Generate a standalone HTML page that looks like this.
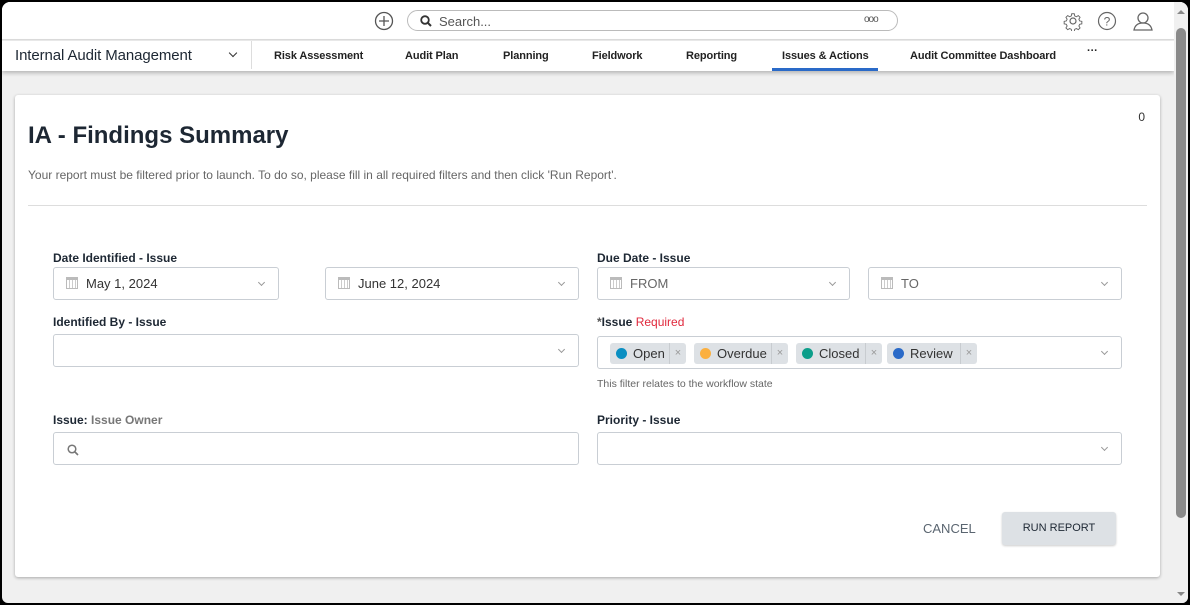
<!DOCTYPE html><html><head><style>
*{box-sizing:border-box;margin:0;padding:0}
body{width:1190px;height:605px;background:#000;font-family:"Liberation Sans",sans-serif;overflow:hidden;position:relative}
.win{position:absolute;left:2px;top:2px;width:1186px;height:601px;background:#f0f0f0;border-radius:8px 8px 6px 6px;overflow:hidden}
.top{position:absolute;left:0;top:0;width:1172px;height:38px;background:#fff;border-bottom:1px solid #ddd}
.nav{position:absolute;left:0;top:39px;width:1172px;height:30px;background:#fff;box-shadow:0 2px 4px rgba(0,0,0,.25)}
.nav span{position:absolute;top:9px;font-size:11px;color:#222;font-weight:bold;letter-spacing:-.1px}
.sb{position:absolute;right:0;top:0;width:14px;height:601px;background:#f0f0f0}
.abs{position:absolute}
.card{position:absolute;left:13px;top:93px;width:1145px;height:482px;background:#fff;border-radius:3px;box-shadow:0 1px 3px rgba(0,0,0,.3)}
.lbl{position:absolute;font-size:12px;color:#1d2733;font-weight:bold}
.inp{position:absolute;height:33px;border:1px solid #c9ced4;border-radius:3px;background:#fff;font-size:13px;color:#333}
.inp .t{position:absolute;left:32px;top:8px}
.chev{position:absolute;right:14px;top:12px;width:5px;height:5px;border-right:1px solid #999;border-bottom:1px solid #999;transform:rotate(45deg)}
.cal{position:absolute;left:12px;top:9px;width:12px;height:12px;border:1px solid #bbb;border-top:3px solid #bbb;background:repeating-linear-gradient(90deg,#fff 0 2px,#ccc 2px 3px)}
.chip{position:absolute;top:6px;height:21px;background:#dde1e5;border-radius:3px;font-size:13px;color:#333}
.chip .d{position:absolute;left:6px;top:5px;width:11px;height:11px;border-radius:50%}
.chip .n{position:absolute;left:23px;top:3px}
.chip .x{position:absolute;right:0;top:0;width:17px;height:21px;border-left:1px solid #c8ccd0;color:#999;font-size:11px;text-align:center;line-height:21px}
</style></head><body><div class="win">
<div class="top">
<svg class="abs" style="left:372px;top:9px" width="20" height="20"><circle cx="10" cy="10" r="8.5" fill="none" stroke="#555" stroke-width="1.3"/><path d="M10 5v10M5 10h10" stroke="#555" stroke-width="1.3"/></svg>
<div class="abs" style="left:405px;top:8px;width:491px;height:21px;border:1px solid #bbb;border-radius:11px"></div>
<svg class="abs" style="left:418px;top:13px" width="12" height="12"><circle cx="5" cy="5" r="3.8" fill="none" stroke="#333" stroke-width="1.8"/><path d="M8 8l3 3" stroke="#333" stroke-width="2"/></svg>
<span class="abs" style="left:437px;top:12px;font-size:13px;color:#555">Search...</span>
<span class="abs" style="left:862px;top:12px;font-size:10px;color:#555;letter-spacing:-1px">ooo</span>
<svg class="abs" style="left:1061px;top:9px" width="20" height="20"><circle cx="10" cy="10" r="3" fill="none" stroke="#666" stroke-width="1.2"/><path d="M8.5 1.5h3l.5 2.5 2 1 2.2-1.4 2.1 2.1-1.4 2.2 1 2 2.5.5v3l-2.5.5-1 2 1.4 2.2-2.1 2.1-2.2-1.4-2 1-.5 2.5h-3l-.5-2.5-2-1-2.2 1.4-2.1-2.1 1.4-2.2-1-2-2.5-.5v-3l2.5-.5 1-2-1.4-2.2 2.1-2.1 2.2 1.4 2-1z" fill="none" stroke="#666" stroke-width="1.1" transform="translate(10 10) scale(.85) translate(-10 -10)"/></svg>
<svg class="abs" style="left:1095px;top:9px" width="20" height="20"><circle cx="10" cy="10" r="8.5" fill="none" stroke="#666" stroke-width="1.2"/><text x="10" y="14.5" font-size="12" text-anchor="middle" fill="#666" font-family="Liberation Sans">?</text></svg>
<svg class="abs" style="left:1130px;top:8px" width="22" height="22"><circle cx="11" cy="8" r="5" fill="none" stroke="#666" stroke-width="1.3"/><path d="M2 20c1-5 4-7 9-7s8 2 9 7z" fill="none" stroke="#666" stroke-width="1.3"/></svg>
</div>
<div class="nav">
<span style="left:13px;top:6px;font-size:15px;color:#1d2733;font-weight:normal">Internal Audit Management</span>
<div class="abs" style="left:228px;top:9px;width:6px;height:6px;border-right:1.5px solid #333;border-bottom:1.5px solid #333;transform:rotate(45deg)"></div>
<div class="abs" style="left:249px;top:0;width:1px;height:28px;background:#ddd"></div>
<span style="left:272px">Risk Assessment</span><span style="left:403px">Audit Plan</span><span style="left:501px">Planning</span><span style="left:590px">Fieldwork</span><span style="left:684px">Reporting</span><span style="left:780px">Issues &amp; Actions</span><span style="left:908px">Audit Committee Dashboard</span><span style="left:1085px;top:4px">···</span>
<div class="abs" style="left:770px;top:27px;width:106px;height:3px;background:#2a6ac8"></div>
</div>
<div class="card">
<div class="abs" style="left:13px;top:27px;font-size:24px;color:#1d2733;font-weight:bold">IA - Findings Summary</div>
<div class="abs" style="right:15px;top:15px;font-size:12px;color:#333">0</div>
<div class="abs" style="left:13px;top:73px;font-size:12px;color:#666">Your report must be filtered prior to launch. To do so, please fill in all required filters and then click 'Run Report'.</div>
<div class="abs" style="left:13px;top:110px;width:1119px;height:1px;background:#ddd"></div>
<div class="lbl" style="left:38px;top:156px">Date Identified - Issue</div>
<div class="inp" style="left:38px;top:172px;width:226px"><div class="cal"></div><span class="t">May 1, 2024</span><div class="chev"></div></div>
<div class="inp" style="left:310px;top:172px;width:254px"><div class="cal"></div><span class="t">June 12, 2024</span><div class="chev"></div></div>
<div class="lbl" style="left:582px;top:156px">Due Date - Issue</div>
<div class="inp" style="left:582px;top:172px;width:253px;color:#666"><div class="cal"></div><span class="t">FROM</span><div class="chev"></div></div>
<div class="inp" style="left:853px;top:172px;width:254px;color:#666"><div class="cal"></div><span class="t">TO</span><div class="chev"></div></div>
<div class="lbl" style="left:38px;top:220px">Identified By - Issue</div>
<div class="inp" style="left:38px;top:239px;width:526px"><div class="chev"></div></div>
<div class="lbl" style="left:582px;top:220px"><span style="color:#555">*</span>Issue <span style="color:#e0283c;font-weight:normal">Required</span></div>
<div class="inp" style="left:582px;top:241px;width:525px">
<div class="chip" style="left:12px;width:76px"><div class="d" style="background:#0a8fc2"></div><span class="n">Open</span><div class="x">×</div></div>
<div class="chip" style="left:96px;width:94px"><div class="d" style="background:#fbb040"></div><span class="n">Overdue</span><div class="x">×</div></div>
<div class="chip" style="left:198px;width:86px"><div class="d" style="background:#0c9e8a"></div><span class="n">Closed</span><div class="x">×</div></div>
<div class="chip" style="left:289px;width:90px"><div class="d" style="background:#2a6ac8"></div><span class="n">Review</span><div class="x">×</div></div>
<div class="chev"></div></div>
<div class="abs" style="left:582px;top:283px;font-size:10.5px;color:#666">This filter relates to the workflow state</div>
<div class="lbl" style="left:38px;top:318px">Issue: <span style="color:#777">Issue Owner</span></div>
<div class="inp" style="left:38px;top:337px;width:526px"><svg class="abs" style="left:13px;top:11px" width="12" height="12"><circle cx="5" cy="5" r="3.8" fill="none" stroke="#777" stroke-width="1.5"/><path d="M8 8l3 3" stroke="#777" stroke-width="1.6"/></svg></div>
<div class="lbl" style="left:582px;top:318px">Priority - Issue</div>
<div class="inp" style="left:582px;top:337px;width:525px"><div class="chev"></div></div>
<div class="abs" style="left:908px;top:426px;font-size:13px;color:#5a6570">CANCEL</div>
<div class="abs" style="left:987px;top:417px;width:114px;height:33px;background:#dde1e5;border-radius:3px;box-shadow:0 1px 2px rgba(0,0,0,.2);font-size:11px;color:#1d2733;text-align:center;line-height:33px">RUN REPORT</div>
</div>
<div class="sb"><div class="abs" style="left:3px;top:8px;width:0;height:0;border:4px solid transparent;border-bottom-color:#888;border-top:0"></div><div class="abs" style="left:2px;top:26px;width:10px;height:490px;background:#8a8a8a;border-radius:5px"></div><div class="abs" style="left:3px;top:590px;width:0;height:0;border:4px solid transparent;border-top-color:#888;border-bottom:0"></div></div>
</div></body></html>
